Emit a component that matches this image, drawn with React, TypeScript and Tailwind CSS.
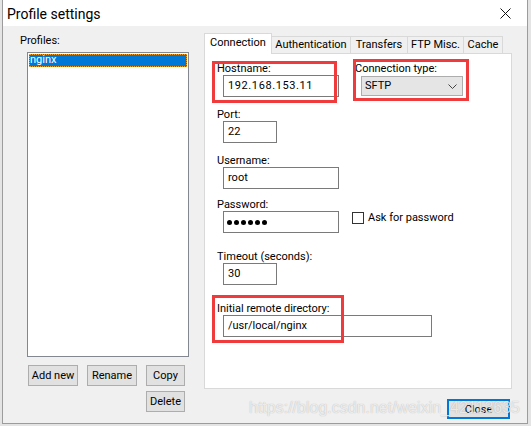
import React from "react";

const font = { fontFamily: "Roboto, 'Liberation Sans', Arial, sans-serif" };

function Field({ label, className, children }: { label: string; className?: string; children: React.ReactNode }) {
  return (
    <div className={className}>
      <div className="h-[13px] leading-[13px] pl-[12px]">{label}</div>
      {children}
    </div>
  );
}

function Input({ w, value, tracking }: { w: string; value?: string; tracking?: boolean }) {
  return (
    <div className={`ml-[18px] h-[22px] border border-[#7a7a7a] bg-white pl-[4px] leading-[20px] text-[#000] ${w} ${tracking ? "tracking-[0.6px]" : ""}`}>
      {value}
    </div>
  );
}

function Btn({ label, w }: { label: string; w: string }) {
  return (
    <div className={`${w} h-[21px] border border-[#adadad] bg-[#e1e1e1] flex items-center justify-center leading-none`}>
      {label}
    </div>
  );
}

export default function App() {
  return (
    <div className="w-[531px] h-[426px] bg-[#e4e4e4] overflow-hidden relative text-[11px] text-[#000]" style={font}>
      <div className="ml-[2px] w-[526px] h-[424px] border-l border-r border-b border-[#9c9c9c] bg-[#f0f0f0] flex flex-col">
        {/* title bar */}
        <div className="h-[26px] bg-white flex items-center justify-between pl-[4px] pr-[16px] shrink-0">
          <div className="text-[14px] leading-none mt-[1px]">Profile settings</div>
          <svg width="11" height="11" viewBox="0 0 11 11" className="mt-[1px]">
            <path d="M0.5 0.5 L10.5 10.5 M10.5 0.5 L0.5 10.5" stroke="#111" strokeWidth="1" />
          </svg>
        </div>
        {/* body */}
        <div className="flex flex-1">
          {/* left */}
          <div className="w-[201px] pl-[17px] pt-[8px] shrink-0">
            <div className="h-[13px] leading-[13px]">Profiles:</div>
            <div className="mt-[5px] ml-[7px] w-[162px] h-[305px] border border-[#828790] bg-white p-[1px]">
              <div className="h-[13px] bg-[#0078d7] text-white leading-[12px] pl-[1px] outline-1 outline-dotted outline-[#f59a23] -outline-offset-1">
                nginx
              </div>
            </div>
            <div className="mt-[8px] ml-[8px] grid grid-cols-[50px_50px_39px] gap-x-[9px] gap-y-[5px]">
              <Btn label="Add new" w="w-[50px]" />
              <Btn label="Rename" w="w-[50px]" />
              <Btn label="Copy" w="w-[39px]" />
              <div />
              <div />
              <Btn label="Delete" w="w-[39px]" />
            </div>
          </div>
          {/* right */}
          <div className="w-[308px] pt-[7px] shrink-0">
            <div className="flex items-end h-[21px] relative z-10 -mb-[1px]">
              <div className="w-[68px] h-[21px] bg-white border-l border-t border-r border-[#d9d9d9] flex items-center justify-center pb-[2px]">
                Connection
              </div>
              <div className="w-[79px] h-[18px] border-t border-r border-b border-[#d9d9d9] bg-[#f0f0f0] flex items-center justify-center">
                Authentication
              </div>
              <div className="w-[57px] h-[18px] border-t border-r border-b border-[#d9d9d9] bg-[#f0f0f0] flex items-center justify-center">
                Transfers
              </div>
              <div className="w-[56px] h-[18px] border-t border-r border-b border-[#d9d9d9] bg-[#f0f0f0] flex items-center justify-center">
                FTP Misc.
              </div>
              <div className="w-[39px] h-[18px] border-t border-r border-b border-[#d9d9d9] bg-[#f0f0f0] flex items-center justify-center">
                Cache
              </div>
            </div>
            <div className="relative w-[308px] h-[336px] border border-[#d9d9d9] bg-white">
              <div className="pt-[8px]">
                <div className="flex">
                  <Field label="Hostname:" className="w-[150px]">
                    <Input w="w-[116px]" value="192.168.153.11" tracking />
                  </Field>
                  <div>
                    <div className="h-[13px] leading-[13px]">Connection type:</div>
                    <div className="ml-[6px] mt-[1px] w-[102px] h-[20px] border border-[#adadad] bg-[#e5e5e5] flex items-center justify-between pl-[3px] pr-[5px]">
                      <span>SFTP</span>
                      <svg width="9" height="5" viewBox="0 0 9 5">
                        <path d="M0.5 0.5 L4.5 4.5 L8.5 0.5" stroke="#444" strokeWidth="1" fill="none" />
                      </svg>
                    </div>
                  </div>
                </div>
                <Field label="Port:" className="mt-[11px]">
                  <Input w="w-[54px]" value="22" />
                </Field>
                <Field label="Username:" className="mt-[11px]">
                  <Input w="w-[116px]" value="root" />
                </Field>
                <Field label="Password:" className="mt-[9px]">
                  <div className="flex items-start">
                    <div className="ml-[18px] w-[116px] h-[22px] border border-[#7a7a7a] bg-white flex items-center gap-[2px] pl-[3px]">
                      {[0, 1, 2, 3, 4, 5].map((i) => (
                        <span key={i} className="w-[5px] h-[5px] rounded-full bg-black" />
                      ))}
                    </div>
                    <div className="ml-[13px] mt-[1px] w-[12px] h-[12px] border border-[#333] bg-white" />
                    <div className="ml-[4px] leading-[13px]">Ask for password</div>
                  </div>
                </Field>
                <Field label="Timeout (seconds):" className="mt-[17px]">
                  <Input w="w-[54px]" value="30" />
                </Field>
                <Field label="Initial remote directory:" className="mt-[17px]">
                  <Input w="w-[209px]" value="/usr/local/nginx" />
                </Field>
              </div>
              {/* annotation boxes */}
              <div className="absolute left-[7px] top-[7px] w-[125px] h-[42px] border-[3px] border-[#ef3b3b]" />
              <div className="absolute left-[148px] top-[5px] w-[116px] h-[42px] border-[3px] border-[#ef3b3b]" />
              <div className="absolute left-[7px] top-[241px] w-[132px] h-[48px] border-[3px] border-[#ef3b3b]" />
            </div>
            <div className="flex justify-end pr-[2px] mt-[10px]">
              <div className="w-[63px] h-[20px] border-2 border-[#0078d7] bg-[#e1e1e1] flex items-center justify-center leading-none">
                Close
              </div>
            </div>
          </div>
        </div>
      </div>
      {/* watermark */}
      <div
        className="absolute left-[249px] top-[399px] text-[16px] leading-[18px] text-white/75 whitespace-nowrap pointer-events-none"
        style={{ fontFamily: "'Liberation Sans', Arial, sans-serif", textShadow: "0 0 1px rgba(0,0,0,0.3)" }}
      >
        https://blog.csdn.net/weixin_42113635
      </div>
    </div>
  );
}
